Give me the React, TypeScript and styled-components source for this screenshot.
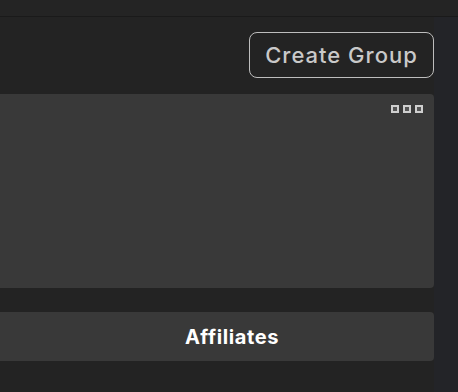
import React from "react";
import styled, { createGlobalStyle } from "styled-components";

const GlobalStyle = createGlobalStyle`
  html, body {
    margin: 0;
    padding: 0;
    background-color: #232323;
    font-family: "Inter", "Liberation Sans", sans-serif;
  }
`;

const PageRoot = styled.div`
  width: 458px;
  height: 392px;
  display: flex;
  flex-direction: column;
  background-color: #232323;
  overflow: hidden;
`;

const TopStrip = styled.div`
  height: 16px;
  border-bottom: 1px solid #1a1a1a;
  background-color: #242424;
`;

const Body = styled.div`
  flex: 1;
  display: flex;
`;

const Main = styled.div`
  width: 434px;
  display: flex;
  flex-direction: column;
`;

const Gutter = styled.div`
  flex: 1;
  background-color: #232428;
`;

const HeaderRow = styled.div`
  display: flex;
  justify-content: flex-end;
  padding-top: 15px;
  height: 46px;
`;

const CreateButton = styled.button`
  height: 46px;
  width: 185px;
  padding: 0;
  border: 1px solid #bdbdbd;
  border-radius: 8px;
  background: transparent;
  color: #c9c9c9;
  font-family: "Inter", "Liberation Sans", sans-serif;
  font-size: 22px;
  font-weight: 500;
  letter-spacing: 1px;
`;

const Card = styled.div`
  margin-top: 16px;
  height: 194px;
  background-color: #393939;
  border-radius: 0 4px 4px 0;
  display: flex;
  justify-content: flex-end;
  padding: 10px 10px 0 0;
  box-sizing: border-box;
`;

const TabBar = styled.div`
  margin-top: 24px;
  height: 49px;
  background-color: #393939;
  border-radius: 0 4px 4px 0;
  display: flex;
  align-items: center;
  justify-content: center;
  padding-left: 30px;
  color: #ffffff;
  font-size: 20px;
  font-weight: 700;
  letter-spacing: 0.6px;
`;

const MoreIcon = () => (
  <svg width="34" height="10" viewBox="0 0 34 10">
    {[0, 12, 24].map((x) => (
      <g key={x}>
        <rect x={x + 1} y={1} width={8} height={8} fill="#cfcfcf" />
        <rect x={x + 3} y={3} width={4} height={4} fill="#555555" />
      </g>
    ))}
  </svg>
);

const App: React.FC = () => {
  return (
    <PageRoot>
      <GlobalStyle />
      <TopStrip />
      <Body>
        <Main>
          <HeaderRow>
            <CreateButton>Create Group</CreateButton>
          </HeaderRow>
          <Card>
            <MoreIcon />
          </Card>
          <TabBar>Affiliates</TabBar>
        </Main>
        <Gutter />
      </Body>
    </PageRoot>
  );
};

export default App;
